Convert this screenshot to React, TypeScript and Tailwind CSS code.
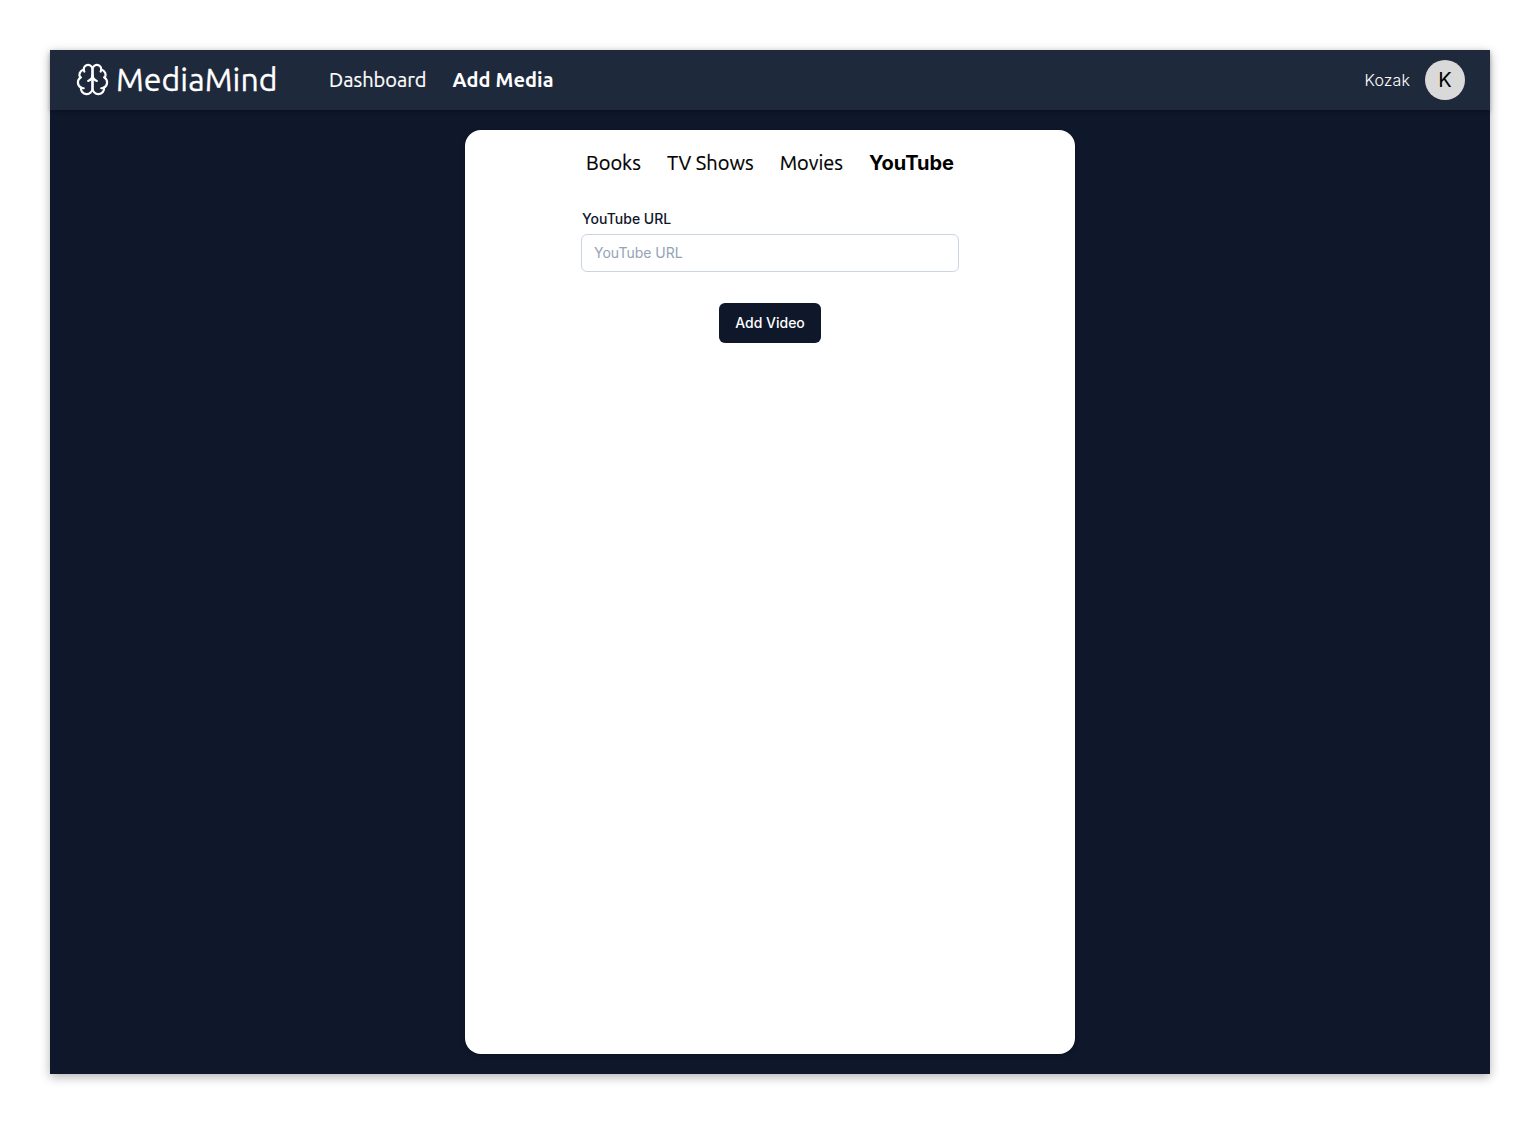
import React from "react";

const ubuntu = "font-['Ubuntu','Noto_Sans',sans-serif]";

function BrainLogo() {
  return (
    <svg
      className="mb-px size-[35px] shrink-0"
      viewBox="0 0 24 24"
      fill="none"
      stroke="currentColor"
      strokeWidth={1.5}
      strokeLinecap="round"
      strokeLinejoin="round"
      aria-hidden="true"
    >
      <path d="M12 5a3 3 0 1 0-5.997.125 4 4 0 0 0-2.526 5.77 4 4 0 0 0 .556 6.588A4 4 0 1 0 12 18Z" />
      <path d="M12 5a3 3 0 1 1 5.997.125 4 4 0 0 1 2.526 5.77 4 4 0 0 1-.556 6.588A4 4 0 1 1 12 18Z" />
      <path d="M15 13a4.5 4.5 0 0 1-3-4 4.5 4.5 0 0 1-3 4" />
      <path d="M17.599 6.5a3 3 0 0 0 .399-1.375" />
      <path d="M6.003 5.125A3 3 0 0 0 6.401 6.5" />
      <path d="M3.477 10.896a4 4 0 0 1 .585-.396" />
      <path d="M19.938 10.5a4 4 0 0 1 .585.396" />
      <path d="M6 18a4 4 0 0 1-1.967-.516" />
      <path d="M19.967 17.484A4 4 0 0 1 18 18" />
    </svg>
  );
}

function Header() {
  return (
    <header className={`flex h-[60px] shrink-0 items-center bg-[#1e293b] px-[25px] text-white shadow-[0_2px_4px_rgba(0,0,0,0.25)] ${ubuntu}`}>
      <BrainLogo />
      <span className="ml-[6px] pb-[2px] text-[32px] leading-none tracking-[0.06px] [-webkit-text-stroke:0.3px]">MediaMind</span>
      <nav className="ml-[51.5px] flex items-center gap-[26px] text-xl leading-none">
        <a className="[-webkit-text-stroke:0.2px]">Dashboard</a>
        <a className="font-bold tracking-[0.1px]">Add Media</a>
      </nav>
      <div className="ml-auto flex items-center gap-[15px] font-['Inter',sans-serif]">
        <span className="text-base leading-none font-light tracking-[0.1px]">Kozak</span>
        <span className="flex size-10 items-center justify-center rounded-full bg-[#d9d9d9] text-xl leading-none text-black">K</span>
      </div>
    </header>
  );
}

export default function App() {
  return (
    <div className="min-h-[1124px] bg-white p-[50px]">
      <div className="flex h-[1024px] w-[1440px] flex-col bg-[#0f172a] shadow-[0_3px_10px_rgba(0,0,0,0.3)]">
        <Header />
        <main className="mx-auto mt-5 flex h-[924px] w-[610px] flex-col items-center rounded-2xl bg-white shadow-[0_2px_4px_rgba(0,0,0,0.25)]">
          <nav className={`mt-[23px] flex items-center gap-[26px] text-xl leading-5 text-black ${ubuntu}`}>
            <a className="[-webkit-text-stroke:0.2px]">Books</a>
            <a className="[-webkit-text-stroke:0.2px]">TV Shows</a>
            <a className="[-webkit-text-stroke:0.2px]">Movies</a>
            <a className="font-['Inter',sans-serif] font-bold">YouTube</a>
          </nav>
          <form className="mt-9 flex w-[378px] flex-col items-center font-['Inter',sans-serif] text-sm">
            <label htmlFor="url" className="self-start pl-px leading-5 font-medium text-[#0f172a]">
              YouTube URL
            </label>
            <input
              id="url"
              type="text"
              placeholder="YouTube URL"
              className="mt-[5px] h-[38px] w-full rounded-md border border-[#cbd5e1] px-3 pb-[2px] text-[#0f172a] placeholder:text-[#94a3b8]"
            />
            <button type="button" className="mt-[31px] h-10 w-[102px] rounded-md bg-[#0f172a] font-medium text-white">
              Add Video
            </button>
          </form>
        </main>
      </div>
    </div>
  );
}
